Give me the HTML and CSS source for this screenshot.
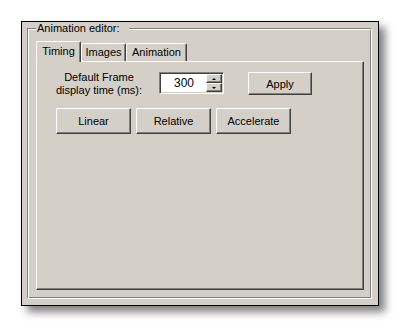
FILE: index.html
```html
<!DOCTYPE html>
<html lang="en">
<head>
    <meta charset="UTF-8">
    <meta name="viewport" content="width=device-width, initial-scale=1.0">
    <title>Animation editor</title>
    <link rel="stylesheet" href="styles.css">
</head>
<body>

<div class="window">
    <div class="group">
        <span class="group-label">Animation editor:</span>

        <div class="tabs">
            <div class="tab tab-active tab-timing">Timing</div>
            <div class="tab tab-images">Images</div>
            <div class="tab tab-anim">Animation</div>
        </div>

        <div class="panel">
            <div class="row">
                <div class="field-label">Default Frame<br>display time (ms):</div>
                <div class="spin">
                    <div class="spin-value">300</div>
                    <div class="spin-buttons">
                        <div class="spin-btn"><span class="arrow-up"></span></div>
                        <div class="spin-btn"><span class="arrow-down"></span></div>
                    </div>
                </div>
                <button class="btn btn-apply">Apply</button>
            </div>
            <div class="row row-buttons">
                <button class="btn btn-wide">Linear</button>
                <button class="btn btn-wide">Relative</button>
                <button class="btn btn-wide">Accelerate</button>
            </div>
        </div>
    </div>
</div>

</body>
</html>
```

FILE: styles.css
```css
body {
    margin: 0;
    padding: 21px;
    background-color: white;
    font-family: "Liberation Sans", Arial, sans-serif;
    font-size: 11px;
    color: black;
}
.window {
    box-sizing: border-box;
    width: 358px;
    height: 285px;
    border: 1px solid black;
    background-color: #d4d0c8;
    padding: 6px 6px 6px 5px;
    box-shadow: 6px 6px 8px rgba(0, 0, 0, 0.5);
    display: flex;
}
.group {
    flex: 1;
    position: relative;
    display: flex;
    flex-direction: column;
    border-top: 1px solid #808080;
    border-left: 1px solid #808080;
    border-right: 1px solid white;
    border-bottom: 1px solid white;
    box-shadow: inset 1px 1px white, inset -1px -1px #808080;
    padding: 12px 7px 8px 8px;
}
.group-label {
    position: absolute;
    top: -7px;
    left: 8px;
    padding: 0 9px 0 1px;
    line-height: 13px;
    background-color: #d4d0c8;
}
.tabs {
    display: flex;
    align-items: flex-end;
    height: 20px;
}
.tab {
    box-sizing: border-box;
    height: 18px;
    line-height: 17px;
    text-align: center;
    border-top: 1px solid white;
    border-left: 1px solid white;
    border-right: 1px solid #404040;
    border-radius: 2px 2px 0 0;
    box-shadow: inset -1px 0 #808080;
}
.tab-active {
    position: relative;
    z-index: 1;
    height: 21px;
    margin-bottom: -1px;
    line-height: 19px;
    background-color: #d4d0c8;
}
.tab-timing {
    width: 45px;
}
.tab-images {
    width: 45px;
}
.tab-anim {
    width: 61px;
}
.panel {
    flex: 1;
    border-top: 1px solid white;
    border-left: 1px solid white;
    border-right: 1px solid #404040;
    border-bottom: 1px solid #404040;
    box-shadow: inset -1px -1px #808080;
    padding: 10px 0 0 19px;
}
.row {
    display: flex;
    align-items: flex-start;
}
.field-label {
    width: 92px;
    margin-left: -3px;
    white-space: nowrap;
    text-align: center;
    line-height: 13px;
    margin-top: -1px;
}
.spin {
    box-sizing: border-box;
    width: 65px;
    height: 22px;
    margin-left: 14px;
    display: flex;
    background-color: white;
    border-top: 1px solid #808080;
    border-left: 1px solid #808080;
    border-right: 1px solid white;
    border-bottom: 1px solid white;
    box-shadow: inset 1px 1px #404040, inset -1px -1px #d4d0c8;
}
.spin-value {
    flex: 1;
    text-align: center;
    line-height: 20px;
    font-size: 12px;
    padding-left: 2px;
}
.spin-buttons {
    width: 16px;
    padding: 1px 1px 1px 0;
    display: flex;
    flex-direction: column;
}
.spin-btn {
    box-sizing: border-box;
    flex: 1;
    display: flex;
    align-items: center;
    justify-content: center;
    background-color: #d4d0c8;
    border-top: 1px solid white;
    border-left: 1px solid white;
    border-right: 1px solid #404040;
    border-bottom: 1px solid #404040;
    box-shadow: inset -1px -1px #808080;
}
.arrow-up, .arrow-down {
    width: 0;
    height: 0;
    border-left: 2px solid transparent;
    border-right: 2px solid transparent;
}
.arrow-up {
    border-bottom: 2px solid black;
}
.arrow-down {
    border-top: 2px solid black;
}
.btn {
    box-sizing: border-box;
    height: 23px;
    padding: 0;
    font-family: "Liberation Sans", Arial, sans-serif;
    font-size: 11px;
    color: black;
    background-color: #d4d0c8;
    border-top: 1px solid white;
    border-left: 1px solid white;
    border-right: 1px solid #404040;
    border-bottom: 1px solid #404040;
    box-shadow: inset -1px -1px #808080;
}
.btn-apply {
    width: 64px;
    margin-left: 24px;
}
.row-buttons {
    margin-top: 11px;
    gap: 5px;
}
.btn-wide {
    width: 75px;
    height: 26px;
}
```
